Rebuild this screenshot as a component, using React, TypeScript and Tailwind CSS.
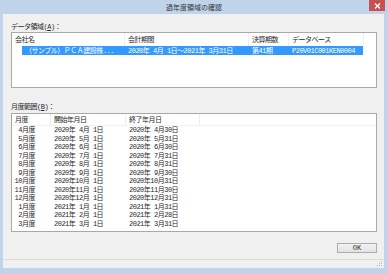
const pad = (n: number) => String(n).padStart(2, ' ')

const months = [
  { y: 2020, m: 4, d: 30 },
  { y: 2020, m: 5, d: 31 },
  { y: 2020, m: 6, d: 30 },
  { y: 2020, m: 7, d: 31 },
  { y: 2020, m: 8, d: 31 },
  { y: 2020, m: 9, d: 30 },
  { y: 2020, m: 10, d: 31 },
  { y: 2020, m: 11, d: 30 },
  { y: 2020, m: 12, d: 31 },
  { y: 2021, m: 1, d: 31 },
  { y: 2021, m: 2, d: 28 },
  { y: 2021, m: 3, d: 31 },
]

const HeaderCell = ({ w, children }: { w: string; children?: React.ReactNode }) => (
  <div className={`${w} h-full pl-[3px] flex items-center border-r border-[#eeeeee] whitespace-pre`}>
    {children}
  </div>
)

export default function App() {
  return (
    <div className="w-[388px] h-[274px] bg-[#bfd3ea] flex flex-col font-['Liberation_Mono','Noto_Sans_CJK_JP',monospace] text-[7px] leading-[8px] text-[#2a2a2a] tracking-[-0.5px]">
      {/* title bar */}
      <div className="h-[14px] shrink-0 relative flex items-center justify-center">
        <span className="font-['Noto_Sans_CJK_JP',sans-serif] tracking-normal text-[#333]">過年度領域の確認</span>
        <div className="absolute right-[3px] top-0 w-[16px] h-[11px] bg-[#c75050] flex items-center justify-center">
          <svg width="7" height="6" viewBox="0 0 7 6">
            <path d="M1 0.5 L6 5.5 M6 0.5 L1 5.5" stroke="#fff" strokeWidth="1.4" />
          </svg>
        </div>
      </div>

      <div className="flex-1 min-h-0 flex pl-[3px] pr-[4px] pb-[6px]">
        <div className="flex-1 bg-[#f0f0f0] flex flex-col">
          <div className="flex-1 flex flex-col pl-[8px] pr-[7px]">
            <div className="mt-[9px] h-[8px] whitespace-pre">
              データ領域(<span className="underline">A</span>)：
            </div>
            <div className="mt-[1px] h-[56px] border border-[#a8a8a8] bg-white flex flex-col">
              <div className="h-[13px] flex">
                <HeaderCell w="w-[113px]">会社名</HeaderCell>
                <HeaderCell w="w-[124px]">会計期間</HeaderCell>
                <HeaderCell w="w-[40px]">決算期数</HeaderCell>
                <HeaderCell w="w-[75px]">データベース</HeaderCell>
              </div>
              <div className="pl-[10px] flex">
                <div className="w-[341px] h-[9px] bg-[#3399ff] text-white flex items-center whitespace-pre">
                  <div className="w-[103px] pl-[3px]">（サンプル）ＰＣＡ建設株...</div>
                  <div className="w-[124px] pl-[3px]">2020年 4月 1日～2021年 3月31日</div>
                  <div className="w-[40px] pl-[3px]">第41期</div>
                  <div className="pl-[3px]">P20V01C001KEN0004</div>
                </div>
              </div>
            </div>

            <div className="mt-[15px] h-[8px] whitespace-pre">
              月度範囲(<span className="underline">B</span>)：
            </div>
            <div className="mt-[2px] h-[119px] border border-[#a8a8a8] bg-white flex flex-col">
              <div className="h-[12px] flex border-b border-[#f2f2f2]">
                <HeaderCell w="w-[39px]">月度</HeaderCell>
                <HeaderCell w="w-[75px]">開始年月日</HeaderCell>
                <HeaderCell w="w-[74px]">終了年月日</HeaderCell>
              </div>
              {months.map((r) => (
                <div key={`${r.y}-${r.m}`} className="h-[8.5px] flex items-center whitespace-pre">
                  <div className="w-[39px] pr-[16px] text-right">{r.m}月度</div>
                  <div className="w-[75px] pl-[3px]">{`${r.y}年${pad(r.m)}月 1日`}</div>
                  <div className="w-[74px] pl-[3px]">{`${r.y}年${pad(r.m)}月${pad(r.d)}日`}</div>
                </div>
              ))}
            </div>

            <div className="mt-[11px] flex justify-end">
              <button className="w-[40px] h-[10px] border border-[#acacac] bg-gradient-to-b from-[#f2f2f2] to-[#e3e3e3] flex items-center justify-center tracking-normal">
                OK
              </button>
            </div>
          </div>

          {/* status strip with size grip */}
          <div className="h-[9px] border-t border-[#dcdcdc] flex justify-end items-end pr-[1px] pb-[1px]">
            <svg width="7" height="7" viewBox="0 0 7 7">
              <rect x="5" y="1" width="1" height="1" fill="#b5b5b5" />
              <rect x="3" y="3" width="1" height="1" fill="#b5b5b5" />
              <rect x="5" y="3" width="1" height="1" fill="#b5b5b5" />
              <rect x="1" y="5" width="1" height="1" fill="#b5b5b5" />
              <rect x="3" y="5" width="1" height="1" fill="#b5b5b5" />
              <rect x="5" y="5" width="1" height="1" fill="#b5b5b5" />
            </svg>
          </div>
        </div>
      </div>
    </div>
  )
}
